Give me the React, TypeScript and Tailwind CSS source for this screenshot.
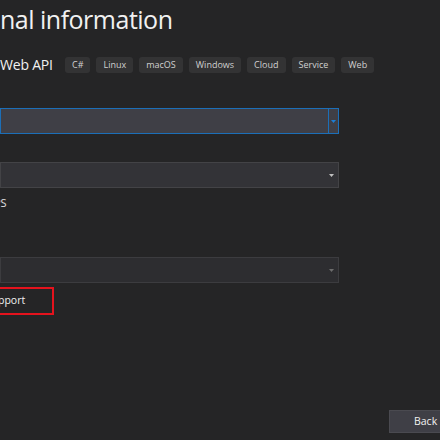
export default function App() {
  const tags = ["C#", "Linux", "macOS", "Windows", "Cloud", "Service", "Web"];
  return (
    <div className="w-[440px] h-[440px] bg-[#252526] overflow-hidden relative text-[#f1f1f1]" style={{ fontFamily: '"Open Sans", "Noto Sans", sans-serif' }}>
      <div className="flex flex-col">
        <div className="h-[40px] pt-[1px] text-[25px] tracking-[-0.5px] leading-[36px] whitespace-nowrap text-[#f1f1f1]">nal information</div>
        <div className="flex items-center h-[18px] mt-[16px] whitespace-nowrap">
          <span className="text-[14px] tracking-[-0.2px] leading-[18px] w-[65px]">Web API</span>
          <div className="flex gap-[6px]">
            {tags.map((t) => (
              <span key={t} className="h-[16px] px-[7px] rounded-[3px] bg-[#333334] text-[#d0d0d0] text-[9px] leading-[16px]">{t}</span>
            ))}
          </div>
        </div>
        <div className="mt-[34px] w-[339px] h-[26px] bg-[#3f3f46] border border-[#1c6fb8] flex">
          <div className="flex-1" />
          <div className="w-[10px] border-l border-[#1c6fb8] flex items-center justify-center">
            <svg width="5" height="3" viewBox="0 0 5 3"><path d="M0 0h5L2.5 3z" fill="#1c7fd6" /></svg>
          </div>
        </div>
        <div className="mt-[28px] w-[339px] h-[26px] bg-[#333337] border border-[#434346] flex items-center justify-end pr-[4px]">
          <svg width="5" height="3" viewBox="0 0 5 3"><path d="M0 0h5L2.5 3z" fill="#c0c0c0" /></svg>
        </div>
        <div className="mt-[8px] h-[14px] text-[11px] leading-[14px] whitespace-nowrap -ml-[6px] text-[#e0e0e0]">PS</div>
        <div className="mt-[47px] w-[339px] h-[26px] bg-[#2d2d30] border border-[#3c3c3f] flex items-center justify-end pr-[4px]">
          <svg width="5" height="3" viewBox="0 0 5 3"><path d="M0 0h5L2.5 3z" fill="#6d6d6d" /></svg>
        </div>
        <div className="mt-[4px] w-[54px] h-[28px] border-2 border-[#e5131d] border-l-0 flex items-center">
          <span className="text-[10.5px] leading-[14px] -mt-[3px] -ml-[2px] text-[#f1f1f1] whitespace-nowrap">pport</span>
        </div>
      </div>
      <div className="absolute left-[389px] top-[410px] w-[60px] h-[23px] bg-[#3f3f46] border border-[#4a4a50] text-[10.5px] leading-[21px] text-[#f1f1f1] pl-[24px]">Back</div>
    </div>
  );
}
